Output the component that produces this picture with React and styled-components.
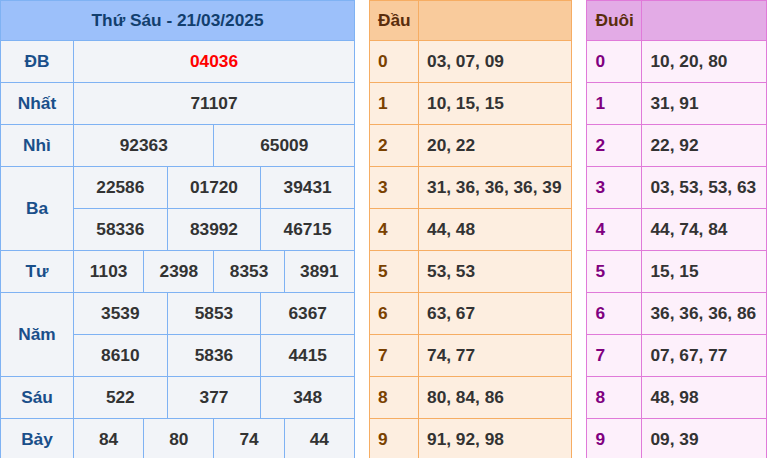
import React from "react";
import styled, { createGlobalStyle } from "styled-components";

const G = createGlobalStyle`
  body { margin:0; background:#fff; font-family:"Liberation Sans", Arial, sans-serif; }
`;
const Page = styled.div`display:flex; gap:14px; align-items:flex-start;`;
const Table = styled.table`
  border-collapse:collapse; table-layout:fixed; width:${p=>p.$w}px;
  font-weight:bold; font-size:17.3px;
  td, th { border:1px solid ${p=>p.$bd}; height:41px; padding:0; }
  th { background:${p=>p.$hd}; height:39px; color:${p=>p.$ht}; }
  td { background:${p=>p.$bg}; color:#333; }
`;
const Label = styled.td`&& { color:#1a4f8a; text-align:center; }`;
const Val = styled.td`text-align:center; && { color:${p=>p.$red ? "#f00" : "#333"}; }`;
const Key = styled.td`&& { color:${p=>p.$c}; padding-left:8px; }`;
const List = styled.td`padding-left:8px !important;`;
const HeadL = styled.th`text-align:left; padding-left:8px !important;`;

const rows = [
  ["ĐB", [["04036"]], true],
  ["Nhất", [["71107"]]],
  ["Nhì", [["92363","65009"]]],
  ["Ba", [["22586","01720","39431"],["58336","83992","46715"]]],
  ["Tư", [["1103","2398","8353","3891"]]],
  ["Năm", [["3539","5853","6367"],["8610","5836","4415"]]],
  ["Sáu", [["522","377","348"]]],
  ["Bảy", [["84","80","74","44"]]],
];
const dau = ["03, 07, 09","10, 15, 15","20, 22","31, 36, 36, 36, 39","44, 48","53, 53","63, 67","74, 77","80, 84, 86","91, 92, 98"];
const duoi = ["10, 20, 80","31, 91","22, 92","03, 53, 53, 63","44, 74, 84","15, 15","36, 36, 36, 86","07, 67, 77","48, 98","09, 39"];

function Results() {
  return (
    <Table $w={356} $bd="#7fb2f3" $hd="#9cc0fa" $ht="#123f6e" $bg="#f2f4f8">
      <colgroup><col style={{width:73}} />{Array.from({length:12}).map((_,i)=><col key={i} />)}</colgroup>
      <thead><tr><th colSpan={13}>Thứ Sáu - 21/03/2025</th></tr></thead>
      <tbody>
        {rows.flatMap(([name, lines, red]) => lines.map((vals, li) => (
          <tr key={name+li}>
            {li===0 && <Label rowSpan={lines.length}>{name}</Label>}
            {vals.map((v,i)=><Val key={i} colSpan={12/vals.length} $red={red}>{v}</Val>)}
          </tr>
        )))}
      </tbody>
    </Table>
  );
}

function Side({ title, data, w, k, bd, hd, ht, bg, kc }) {
  return (
    <Table $w={w} $bd={bd} $hd={hd} $ht={ht} $bg={bg}>
      <colgroup><col style={{width:k}} /><col /></colgroup>
      <thead><tr><HeadL>{title}</HeadL><th></th></tr></thead>
      <tbody>
        {data.map((d,i)=>(
          <tr key={i}><Key $c={kc}>{i}</Key><List>{d}</List></tr>
        ))}
      </tbody>
    </Table>
  );
}

export default function App() {
  return (
    <Page>
      <G />
      <Results />
      <Side title="Đầu" data={dau} w={204} k={49} bd="#f6ad63" hd="#f9cb9c" ht="#5a2d0c" bg="#fdeee0" kc="#7a4100" />
      <Side title="Đuôi" data={duoi} w={181} k={55} bd="#e07ad9" hd="#e3abe6" ht="#5a2d0c" bg="#fdf0fb" kc="#800080" />
    </Page>
  );
}
